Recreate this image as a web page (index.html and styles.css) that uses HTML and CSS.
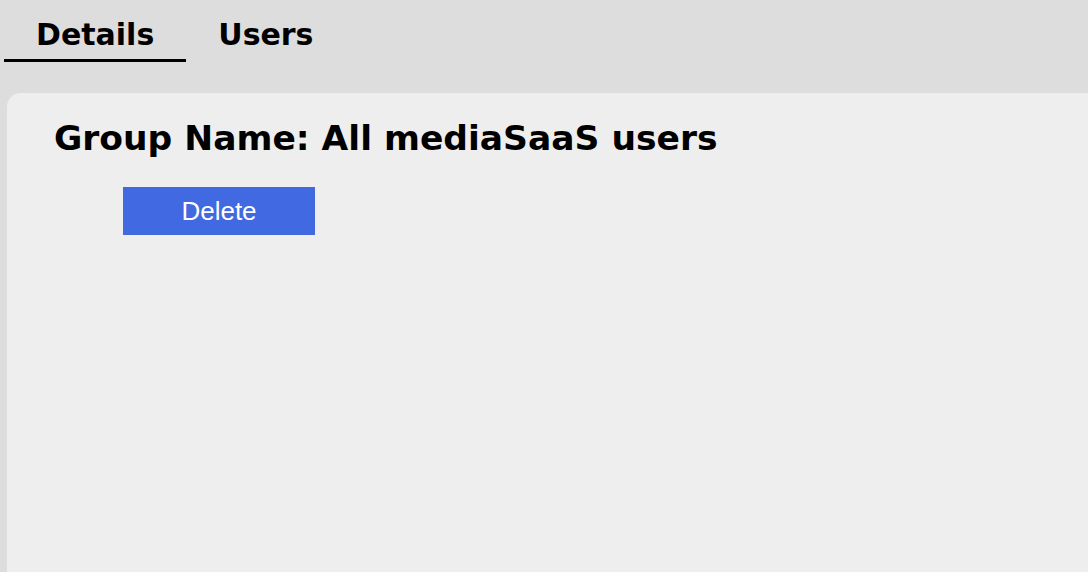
FILE: index.html
```html
<!DOCTYPE html>
<html>
<head>
<meta charset="utf-8">
<link rel="stylesheet" href="styles.css">
</head>
<body>
<div class="tabs">
  <div class="tab active">Details</div>
  <div class="tab">Users</div>
</div>
<div class="panel">
  <h1 class="title">Group Name: All mediaSaaS users</h1>
  <div class="actions">
    <button class="btn">Delete</button>
  </div>
</div>
</body>
</html>
```
FILE: styles.css
```css
html, body {
  margin: 0;
  padding: 0;
  background: #dddddd;
  height: 100%;
  overflow: hidden;
}
body {
  font-family: "DejaVu Sans", sans-serif;
}
.tabs {
  display: flex;
  padding-left: 4px;
  height: 93px;
  box-sizing: border-box;
  padding-top: 15px;
  align-items: flex-start;
}
.tab {
  font-weight: bold;
  font-size: 30px;
  padding: 0 32px;
  height: 47px;
  line-height: 40px;
  box-sizing: border-box;
  color: #000;
}
.tab.active {
  border-bottom: 3px solid #000;
}
.panel {
  margin-left: 7px;
  background: #eeeeee;
  border-top-left-radius: 14px;
  height: calc(100% - 93px);
  padding: 25px 0 0 47px;
  box-sizing: border-box;
}
.title {
  margin: 0;
  font-size: 34.5px;
  font-weight: bold;
  line-height: 40px;
}
.actions {
  padding-left: 69px;
  margin-top: 29px;
}
.btn {
  display: block;
  width: 192px;
  height: 48px;
  background: #4169e1;
  color: #fff;
  border: none;
  font-family: "Liberation Sans", Arial, sans-serif;
  font-size: 26px;
  padding: 0;
}
```
